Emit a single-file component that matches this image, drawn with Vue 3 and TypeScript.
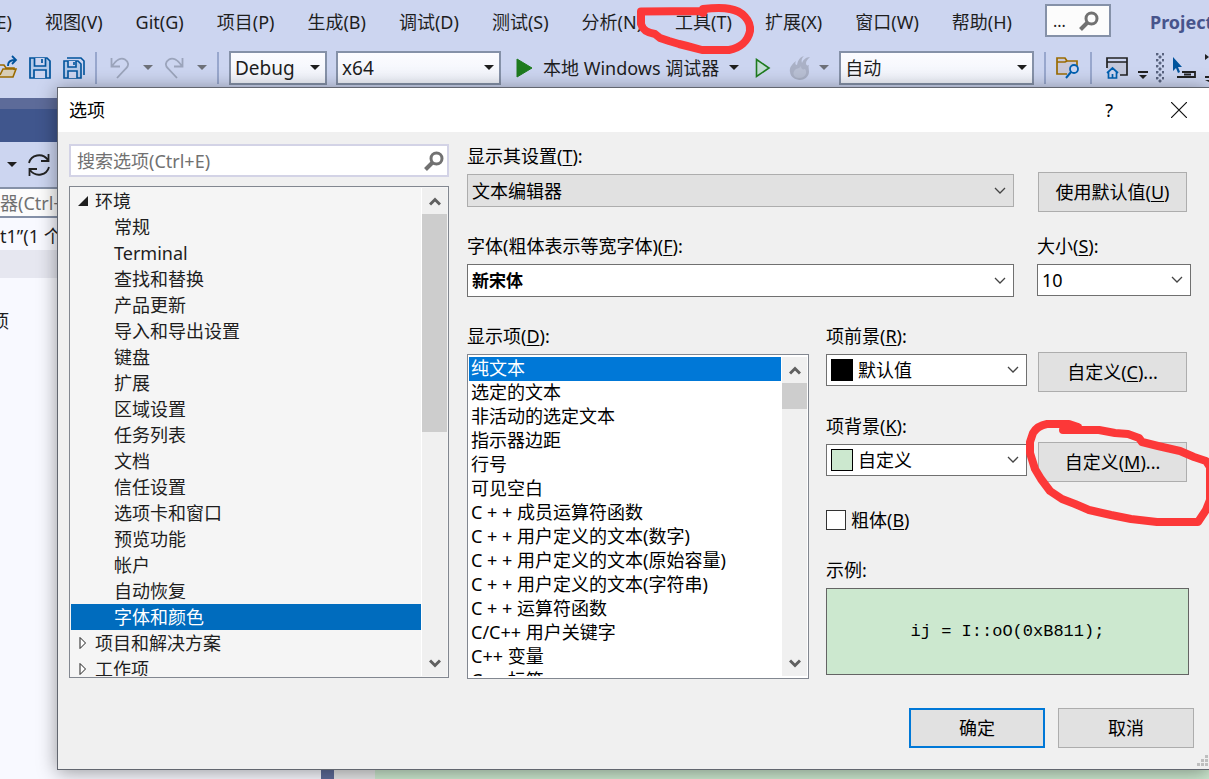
<script setup lang="ts">
import { ref } from 'vue'

interface TreeRow {
  text: string
  level: number
  state?: 'open' | 'closed'
}

const menus = ['视图(V)', 'Git(G)', '项目(P)', '生成(B)', '调试(D)', '测试(S)', '分析(N)', '工具(T)', '扩展(X)', '窗口(W)', '帮助(H)']

const tree: TreeRow[] = [
  { text: '环境', level: 0, state: 'open' },
  ...['常规', 'Terminal', '查找和替换', '产品更新', '导入和导出设置', '键盘', '扩展', '区域设置', '任务列表', '文档', '信任设置', '选项卡和窗口', '预览功能', '帐户', '自动恢复', '字体和颜色'].map((text) => ({ text, level: 1 })),
  { text: '项目和解决方案', level: 0, state: 'closed' },
  { text: '工作项', level: 0, state: 'closed' },
]

const items = ['纯文本', '选定的文本', '非活动的选定文本', '指示器边距', '行号', '可见空白', 'C + + 成员运算符函数', 'C + + 用户定义的文本(数字)', 'C + + 用户定义的文本(原始容量)', 'C + + 用户定义的文本(字符串)', 'C + + 运算符函数', 'C/C++ 用户关键字', 'C++ 变量', 'C++ 标签']

const activePage = ref('字体和颜色')
const activeItem = ref('纯文本')
const bold = ref(false)
</script>

<template>
  <div class="ide">
    <nav class="menubar">
      <button class="menu first">E)</button>
      <button v-for="m in menus" :key="m" class="menu">{{ m }}</button>
      <button class="quick" aria-label="搜索">
        <span>...</span>
        <svg width="20" height="20" viewBox="0 0 20 20"><circle cx="12.5" cy="7.5" r="5.5" /><path d="M8.5 11.5 1.5 18.5" class="handle" /></svg>
      </button>
      <span class="project">Project</span>
    </nav>

    <div class="toolbar">
      <button class="tool open" aria-label="打开">
        <svg width="18" height="26" viewBox="0 0 18 26">
          <path d="M0 10h4l2 3h8v2M0 22h13l3-8H3L0 20" fill="#d8cdb5" stroke="#9a6b00" stroke-width="1.6" />
          <path d="M8 11c0-5 3-6 8-6M12 1l4 4-4 4" fill="none" stroke="#00539c" stroke-width="1.8" />
        </svg>
      </button>
      <button class="tool save" aria-label="保存">
        <svg width="22" height="22" viewBox="0 0 22 22" fill="none" stroke="#00539c" stroke-width="1.7">
          <path d="M1 1h17l3 3v17H1z" fill="#b4c9e8" /><path d="M5.500 1v8h11V1M13 2v4M5 21v-8h12v8" fill="#ccd5f0" />
        </svg>
      </button>
      <button class="tool saveall" aria-label="全部保存">
        <svg width="22" height="22" viewBox="0 0 22 22" fill="none" stroke="#00539c" stroke-width="1.6">
          <path d="M4 1h14l3 3v14" /><path d="M1 4h14l3 3v14H1z" fill="#b4c9e8" /><path d="M5 4v6h8V4M11 5v3M5 21v-7h9v7" fill="#ccd5f0" />
        </svg>
      </button>
      <i class="rule"></i>
      <button class="tool undo" aria-label="撤消">
        <svg width="20" height="22" viewBox="0 0 20 22" fill="none" stroke="#9ba4bb" stroke-width="1.8"><path d="M1.500 1v8.500H10M2 9C6 3 11 0 15 2.500c4 2.500 4 6 1 9L7 21" /></svg>
        <svg class="tri dim" width="10" height="6" viewBox="0 0 10 6"><path d="M0 0h10L5 5z" /></svg>
      </button>
      <button class="tool redo" aria-label="恢复">
        <svg width="20" height="22" viewBox="0 0 20 22" fill="none" stroke="#9ba4bb" stroke-width="1.8"><path d="M18.500 1v8.500H10M18 9C14 3 9 0 5 2.500c-4 2.500-4 6-1 9L13 21" /></svg>
        <svg class="tri dim" width="10" height="6" viewBox="0 0 10 6"><path d="M0 0h10L5 5z" /></svg>
      </button>
      <i class="rule"></i>
      <div class="vs-combo config">
        <select aria-label="解决方案配置"><option>Debug</option></select>
        <svg class="tri" width="10" height="6" viewBox="0 0 10 6"><path d="M0 0h10L5 5z" /></svg>
      </div>
      <div class="vs-combo platform">
        <select aria-label="解决方案平台"><option>x64</option></select>
        <svg class="tri" width="10" height="6" viewBox="0 0 10 6"><path d="M0 0h10L5 5z" /></svg>
      </div>
      <button class="tool debug">
        <svg width="17" height="20" viewBox="0 0 17 20"><path d="M1 1 16 10 1 19z" fill="#1e7b1e" stroke="#1e7b1e" /></svg>
        <span>本地 Windows 调试器</span>
        <svg class="tri" width="10" height="6" viewBox="0 0 10 6"><path d="M0 0h10L5 5z" /></svg>
      </button>
      <button class="tool run" aria-label="开始执行">
        <svg width="16" height="20" viewBox="0 0 16 20"><path d="M1.500 1.500 14 10 1.500 18.500z" fill="#c2dcd5" stroke="#1e7b1e" stroke-width="1.600" /></svg>
      </button>
      <button class="tool reload" aria-label="热重载">
        <svg width="22" height="26" viewBox="0 0 22 26"><path d="M15 1C9 3 9 7 8 10 6 10 6 8 7 6 3 9 0 13 1 17c1 10 18 11 19 0 0-3-1-5 0-7-2 1-3 0-3-2 0-2 2-4 4-6-4 0-7 3-8 6-1-3 0-5 2-7z" fill="#aab1c6" /><path d="M12 11c-1 2-3 2-5 3-5 4-2 9 3 9 6 0 9-5 6-9-2 1-4 0-4-3z" fill="#b9c0d4" /></svg>
        <svg class="tri dim" width="10" height="6" viewBox="0 0 10 6"><path d="M0 0h10L5 5z" /></svg>
      </button>
      <div class="vs-combo process">
        <select aria-label="调试器类型"><option>自动</option></select>
        <svg class="tri" width="10" height="6" viewBox="0 0 10 6"><path d="M0 0h10L5 5z" /></svg>
      </div>
      <i class="rule"></i>
      <button class="tool find" aria-label="在文件中查找">
        <svg width="24" height="22" viewBox="0 0 24 22" fill="none">
          <path d="M1 1h8l2 3h10v10l-8 3H1z" fill="#c9c8d8" />
          <path d="M11 17H1V1h8l2 3h10v5M1 5h8l2-1" stroke="#9a6b00" stroke-width="1.700" />
          <circle cx="18" cy="12" r="4" fill="#ccd5f0" stroke="#0060b0" stroke-width="1.800" /><path d="m15 15-5 6" stroke="#0060b0" stroke-width="2" />
        </svg>
      </button>
      <i class="rule"></i>
      <button class="tool home" aria-label="主页">
        <svg width="22" height="22" viewBox="0 0 22 22" fill="none">
          <path d="M1 5h20v13h-7l-7-8-6 3z" fill="#c3c8dc" />
          <path d="M1 11V1h20v17h-7M1 5h20" stroke="#222" stroke-width="1.700" />
          <path d="M1 16l5.500-5 5.500 5M2.500 15v6h8v-6M6.500 21v-4" stroke="#0060b0" stroke-width="1.700" />
        </svg>
        <svg class="more" width="10" height="8" viewBox="0 0 10 8"><path d="M0 0h10v2H0zM1 4h8L5 8z" fill="#222" /></svg>
      </button>
      <i class="grip"></i>
      <button class="tool pick" aria-label="选择元素">
        <svg width="24" height="24" viewBox="0 0 24 24"><path d="M1 1v14l3-3 2 5 2-1-2-5h4z" fill="#00539c" /><path d="M5 21h18v-5H10M12 18.500h7" fill="none" stroke="#222" stroke-width="1.800" /></svg>
      </button>
      <button class="tool" aria-label="更多">
        <svg width="10" height="28" viewBox="0 0 10 28"><path d="M0 0l4 3-4 3zM0 22h8v2H0zM0 26h7l-3 2z" fill="#222" /></svg>
      </button>
    </div>

    <div class="workspace">
      <aside class="explorer">
        <div class="cap"></div>
        <div class="tabwell"></div>
        <div class="ex-tools">
          <svg class="tri" width="10" height="6" viewBox="0 0 10 6"><path d="M0 0h10L5 5z" /></svg>
          <svg width="24" height="24" viewBox="0 0 24 24" fill="none" stroke="#222" stroke-width="1.800"><path d="M2 10C4 2 15-1 21 7M21.500 1v7H14M22 14C20 22 9 25 3 17M2.500 23v-7H10" /></svg>
        </div>
        <input class="ex-search" aria-label="搜索解决方案资源管理器" placeholder="器(Ctrl+;)" />
        <div class="ex-row">t1”(1 个项目)</div>
        <div class="ex-row selected"></div>
        <div class="ex-cut"><span>项</span></div>
      </aside>
      <div class="splitter"></div>
      <div class="margin"></div>
      <main class="editor"></main>
    </div>

    <section class="dialog" role="dialog" aria-label="选项">
      <header class="titlebar">
        <h1>选项</h1>
        <button aria-label="帮助">?</button>
        <button aria-label="关闭"><svg width="16" height="16" viewBox="0 0 16 16"><path d="m0 0 16 16M16 0 0 16" stroke="#111" stroke-width="1.200" /></svg></button>
      </header>

      <div class="content">
        <div class="left">
          <div class="search">
            <input aria-label="搜索选项" placeholder="搜索选项(Ctrl+E)" />
            <svg width="20" height="20" viewBox="0 0 20 20"><circle cx="12.500" cy="7.500" r="5.500" /><path d="M8.500 11.500 1.500 18.500" class="handle" /></svg>
          </div>
          <div class="tree">
            <ul role="tree">
              <li v-for="row in tree" :key="row.text" role="treeitem" :class="['lvl' + row.level, { active: row.text === activePage }]" :aria-selected="row.text === activePage" @click="activePage = row.text">
                <svg v-if="row.state === 'open'" width="10" height="10" viewBox="0 0 10 10"><path d="M10 0v10H0z" fill="#1e1e1e" /></svg>
                <svg v-if="row.state === 'closed'" width="10" height="14" viewBox="0 0 10 14"><path d="M2 1.500 7.500 7 2 12.500z" fill="#fff" stroke="#1e1e1e" /></svg>
                {{ row.text }}
              </li>
            </ul>
            <div class="scroll">
              <button aria-label="向上滚动"><svg width="12" height="9" viewBox="0 0 12 9"><path d="m1 7.500 5-5 5 5" /></svg></button>
              <i class="thumb"></i>
              <button aria-label="向下滚动"><svg width="12" height="9" viewBox="0 0 12 9"><path d="m1 1.500 5 5 5-5" /></svg></button>
            </div>
          </div>
        </div>

        <div class="right">
          <div class="row">
            <div class="field">
              <label for="scope">显示其设置(<u>T</u>):</label>
              <div class="combo gray"><select id="scope"><option>文本编辑器</option></select><svg class="chev" width="12" height="8" viewBox="0 0 12 8"><path d="m1 1 5 5 5-5" /></svg></div>
            </div>
            <div class="side"><button class="btn">使用默认值(<u>U</u>)</button></div>
          </div>
          <div class="row">
            <div class="field">
              <label for="font">字体(粗体表示等宽字体)(<u>F</u>):</label>
              <div class="combo strong"><select id="font"><option>新宋体</option></select><svg class="chev" width="12" height="8" viewBox="0 0 12 8"><path d="m1 1 5 5 5-5" /></svg></div>
            </div>
            <div class="field">
              <label for="size">大小(<u>S</u>):</label>
              <div class="combo"><select id="size"><option>10</option></select><svg class="chev" width="12" height="8" viewBox="0 0 12 8"><path d="m1 1 5 5 5-5" /></svg></div>
            </div>
          </div>
          <div class="lower">
            <div class="field">
              <label id="items-label">显示项(<u>D</u>):</label>
              <div class="list">
                <ul role="listbox" aria-labelledby="items-label">
                  <li v-for="it in items" :key="it" role="option" :class="{ active: it === activeItem }" :aria-selected="it === activeItem" @click="activeItem = it">{{ it }}</li>
                </ul>
                <div class="scroll">
                  <button aria-label="向上滚动"><svg width="12" height="9" viewBox="0 0 12 9"><path d="m1 7.500 5-5 5 5" /></svg></button>
                  <i class="thumb"></i>
                  <button aria-label="向下滚动"><svg width="12" height="9" viewBox="0 0 12 9"><path d="m1 1.500 5 5 5-5" /></svg></button>
                </div>
              </div>
            </div>
            <div class="colors">
              <div class="color-row">
                <div class="field">
                  <label for="fg">项前景(<u>R</u>):</label>
                  <div class="combo"><i class="swatch black"></i><select id="fg"><option>默认值</option></select><svg class="chev" width="12" height="8" viewBox="0 0 12 8"><path d="m1 1 5 5 5-5" /></svg></div>
                </div>
                <div class="side"><button class="btn">自定义(<u>C</u>)...</button></div>
              </div>
              <div class="color-row">
                <div class="field">
                  <label for="bg">项背景(<u>K</u>):</label>
                  <div class="combo"><i class="swatch green"></i><select id="bg"><option>自定义</option></select><svg class="chev" width="12" height="8" viewBox="0 0 12 8"><path d="m1 1 5 5 5-5" /></svg></div>
                </div>
                <div class="side"><button class="btn">自定义(<u>M</u>)...</button></div>
              </div>
              <div class="check"><input id="bold" v-model="bold" type="checkbox" /><label for="bold">粗体(<u>B</u>)</label></div>
              <div class="sample-label">示例:</div>
              <div class="sample">ij = I::oO(0xB811);</div>
            </div>
          </div>
        </div>
      </div>

      <footer class="footer">
        <button class="btn primary">确定</button>
        <button class="btn">取消</button>
      </footer>
      <svg class="sizer" width="12" height="12" viewBox="0 0 12 12"><path d="M8 0h3v3H8zM4 4h3v3H4zM8 4h3v3H8zM0 8h3v3H0zM4 8h3v3H4zM8 8h3v3H8z" fill="#bfbfbf" /></svg>
    </section>

    <svg class="ink" width="1209" height="779" viewBox="0 0 1209 779">
      <path d="M704 11 641 11.500V24c2 7 7 9 14 10l5 4 9 3 10 3 8 2 15 4h27c11-2 19-9 21-19 1-11-8-20-20-22-9-2-18-1-27 0v4" />
      <path d="M1063 430h36l16 3 13 1 11 4 3 4 16 4 22 5 14 6 12 4 4 6V500l-4 10-8 12h-41l-26-3-20-4-22-5-14-6-13-5-12-8-9-12-6-10-5-16V442l3-9c3-5 8-8 14-9h22l9 3" />
    </svg>
  </div>
</template>

<style>
html, body { margin: 0; overflow: hidden; }
</style>

<style scoped>
* { box-sizing: border-box; }
.ide { position: relative; height: 100vh; overflow: hidden; display: flex; flex-direction: column; background: #ccd5f0; color: #1e1e1e; font: 18px/24px "Noto Sans", "Noto Sans CJK SC", sans-serif; }
button, input, select { font: inherit; color: inherit; }
button { border: 0; padding: 0; background: none; }
ul { list-style: none; margin: 0; padding: 0; }
svg { flex: none; display: block; }
u { text-underline-offset: 2px; text-decoration-thickness: 1px; }
select { appearance: none; border: 0; outline: 0; background: none; flex: 1; min-width: 0; padding: 0; }

.menubar { flex: none; height: 46px; display: flex; align-items: center; gap: 33px; white-space: nowrap; padding-bottom: 2px; }
.menu { flex: none; }
.first { width: 12px; display: flex; justify-content: flex-end; }
.quick { flex: none; width: 66px; height: 33px; border: 2px solid #8591a8; background: #fcfcfc; display: flex; align-items: center; justify-content: space-between; padding: 0 10px 0 6px; margin-bottom: 3px; font-size: 16px; }
.quick svg circle, .search svg circle { fill: none; stroke: #717171; stroke-width: 3; }
.handle { stroke: #717171; stroke-width: 4; }
.project { flex: none; margin-left: 6px; font-weight: 700; color: #47548c; }

.toolbar { flex: none; height: 52px; display: flex; align-items: center; padding-bottom: 8px; white-space: nowrap; }
.tool { flex: none; display: flex; align-items: center; }
.open { width: 17px; }
.save { margin-left: 12px; }
.saveall { margin-left: 12px; }
.rule { flex: none; width: 2px; height: 32px; background: #98a7cd; margin: 0 10px; }
.undo, .redo { gap: 13px; }
.undo { margin: 0 11px 0 3px; }
.tri { fill: #1e1e1e; }
.tri.dim { fill: #6d7078; }
.vs-combo { flex: none; height: 34px; display: flex; align-items: center; border: 2px solid #8591a8; background: linear-gradient(#fcfcff, #f0f3fb); padding: 0 5px 0 4px; }
.config { width: 98px; }
.platform { width: 165px; margin-left: 9px; }
.process { width: 195px; margin-left: 10px; }
.config select, .platform select { font-size: 19px; }
.debug { margin-left: 15px; gap: 10px; }
.run { margin-left: 16px; }
.reload { margin-left: 18px; gap: 8px; }
.home { gap: 10px; margin-left: 4px; }
.more { align-self: flex-end; }
.grip { flex: none; width: 8px; height: 30px; margin: 0 8px; background: radial-gradient(circle at 1px 1px, #59637f 1px, transparent 2px) 0 0 / 6px 6px, radial-gradient(circle at 4px 4px, #59637f 1px, transparent 2px) 0 0 / 6px 6px; }
.pick { margin-right: 9px; }

.workspace { flex: 1; display: flex; min-height: 0; background: #f8f9ff; }
.explorer { width: 321px; background: #f8f9ff; display: flex; flex-direction: column; }
.cap { height: 11px; background: #5d6b99; }
.tabwell { height: 33px; background: #40568d; }
.ex-tools { height: 45px; background: #ccd5f0; display: flex; align-items: center; gap: 10px; padding-left: 7px; }
.ex-search { height: 31px; border: 2px solid #8591a8; border-width: 2px 0; background: #fcfcfc; padding: 0; }
.ex-search::placeholder, .search input::placeholder { color: #717171; opacity: 1; }
.ex-row { height: 28px; line-height: 28px; margin-top: 4px; white-space: nowrap; }
.ex-row.selected { margin: 0; background: #e6e7f0; }
.ex-cut { width: 9px; margin-top: 31px; overflow: hidden; display: flex; justify-content: flex-end; }
.splitter { width: 13px; background: #5d6b99; }
.margin { width: 41px; background: #e6e7e8; }
.editor { flex: 1; background: #cce8cf; }

.dialog { position: absolute; top: 87px; left: 57px; right: 0; background: #f0f0f0; border: 1px solid #62666f; border-right: 0; box-shadow: 0 2px 18px rgba(0, 0, 0, .4); color: #000; }
.titlebar { height: 44px; background: #fff; display: flex; align-items: center; padding: 0 22px 0 11px; gap: 58px; }
.titlebar h1 { flex: 1; margin: 0; font: inherit; }
.titlebar button { display: block; }
.content { display: grid; grid-template-columns: minmax(0, 380fr) minmax(0, 724fr); gap: 18px; padding: 12px 18px 0 11px; }
.left { display: flex; flex-direction: column; gap: 9px; }
.search { height: 33px; display: flex; align-items: center; background: #fff; border: 2px solid #d3d3e6; padding: 0 3px 0 6px; }
.search input { flex: 1; min-width: 0; border: 0; outline: 0; padding: 0; background: none; }
.tree { height: 492px; display: flex; border: 1px solid #828790; padding: 1px; background: #f5f5f5; color: #1e1e1e; }
.tree ul, .list ul { flex: 1; min-width: 0; overflow: hidden; white-space: nowrap; }
.tree li { height: 26px; line-height: 26px; display: flex; align-items: center; gap: 7px; padding-left: 7px; }
.tree li.lvl1 { padding-left: 43px; }
.tree li.active { background: #006cbe; color: #fff; }
.scroll { width: 26px; display: flex; flex-direction: column; align-items: stretch; background: #f0f0f0; border-left: 1px solid #fff; }
.scroll button { height: 26px; display: flex; align-items: center; justify-content: center; }
.scroll button path { fill: none; stroke: #606060; stroke-width: 3; }
.scroll button:last-child { margin-top: auto; }
.thumb { height: 218px; background: #cdcdcd; }
.list .thumb { height: 26px; }

.right { display: flex; flex-direction: column; gap: 27px; }
.row { display: grid; grid-template-columns: minmax(0, 547fr) minmax(0, 154fr); gap: 23px; height: 63px; }
.field { display: flex; flex-direction: column; gap: 6px; min-width: 0; }
.combo { height: 32px; display: flex; align-items: center; background: #fff; border: 1px solid #707070; padding: 0 7px 0 4px; }
.combo.gray { height: 33px; background: #e1e1e1; border-color: #adadad; }
.combo.strong { height: 33px; font-size: 17px; font-weight: 700; }
.chev path { fill: none; stroke: #444; stroke-width: 1.3; }
.side { padding: 28px 4px 0 1px; }
.btn { width: 100%; height: 40px; background: #e1e1e1; border: 1px solid #adadad; white-space: nowrap; }
.lower { display: grid; grid-template-columns: minmax(0, 342fr) minmax(0, 365fr); gap: 17px; }
.list { height: 325px; display: flex; background: #fff; border: 1px solid #828790; padding: 2px 1px; }
.list li { height: 24px; line-height: 22px; padding-left: 2px; }
.list li.active { background: #0078d7; color: #fff; }
.color-row { display: grid; grid-template-columns: minmax(0, 201fr) minmax(0, 154fr); gap: 10px; height: 90px; }
.swatch { width: 22px; height: 22px; border: 1px solid #000; margin-right: 5px; }
.black { background: #000; }
.green { background: #cce8cf; }
.check { display: flex; align-items: center; gap: 5px; margin-top: 4px; }
.check input { appearance: none; width: 20px; height: 20px; margin: 0; border: 1px solid #333; background: #fff; }
.sample-label { margin: 26px 0 6px; }
.sample { height: 87px; margin-right: 2px; display: flex; align-items: center; justify-content: center; background: #cce8cf; border: 1px solid #646464; font: 17px/24px "Liberation Mono", monospace; }
.footer { display: flex; justify-content: flex-end; gap: 13px; padding: 29px 15px 21px; }
.footer .btn { width: 136px; }
.footer .primary { border: 2px solid #0078d7; }
.sizer { position: absolute; right: 0; bottom: 2px; }
.ink { position: absolute; top: 0; left: 0; pointer-events: none; fill: none; stroke: #fc3838; stroke-width: 8; stroke-linecap: round; stroke-linejoin: round; }
</style>
